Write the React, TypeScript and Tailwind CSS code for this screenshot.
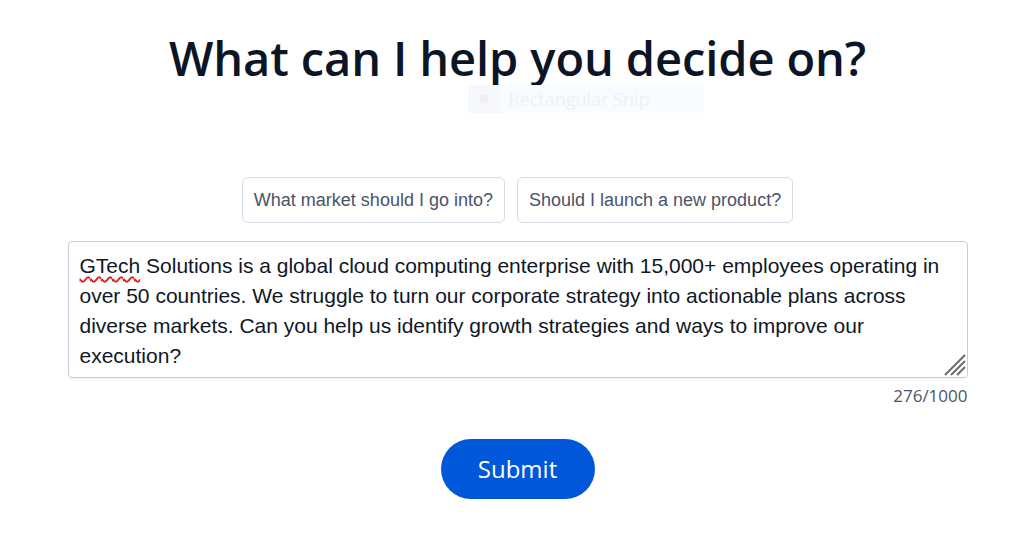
import { useState } from "react";

const suggestions = ["What market should I go into?", "Should I launch a new product?"];

const App = () => {
  const [text] = useState(
    "GTech Solutions is a global cloud computing enterprise with 15,000+ employees operating in over 50 countries. We struggle to turn our corporate strategy into actionable plans across diverse markets. Can you help us identify growth strategies and ways to improve our execution?"
  );

  return (
    <div className="min-h-screen bg-white flex flex-col items-center pt-[24px]">
      <h1 className="text-[47px] leading-[68px] font-semibold text-[#0b1526] font-['Open_Sans',sans-serif] tracking-[-0.1px]">
        What can I help you decide on?
      </h1>

      {/* faint screen-snip leftover */}
      <div className="w-[236px] h-[28px] -mt-[7px] ml-[136px] bg-[#f8fbff] flex items-center font-['Open_Sans',sans-serif]">
        <div className="w-[32px] h-full bg-[#f5f9fe] flex items-center justify-center">
          <div className="w-[10px] h-[10px] rounded-full bg-[#f3eff0]" />
        </div>
        <span className="ml-[9px] text-[18px] text-[#eff1f3]">Rectangular Snip</span>
      </div>

      <div className="flex gap-3 mt-[64px]">
        {suggestions.map((s) => (
          <button
            key={s}
            className="h-[46px] px-[11px] rounded-md border border-[#d6dde8] bg-white text-[18px] text-[#4a5468] font-['Liberation_Sans',Arial,sans-serif]"
          >
            {s}
          </button>
        ))}
      </div>

      <div className="w-[900px] mt-[18px]">
        <div className="relative h-[137px] rounded-[4px] border border-[#c3cddc] shadow-[0_1px_2px_rgba(0,0,0,0.06)] px-[11px] pt-[9px] text-[21px] leading-[30px] text-[#0f1728] font-['Liberation_Sans',Arial,sans-serif]">
          <span className="underline decoration-wavy decoration-[#e0201a] decoration-[1.5px] underline-offset-[3px]">
            GTech
          </span>
          {text.slice(5)}
          <svg
            className="absolute right-[1px] bottom-[1px]"
            width="24"
            height="24"
            viewBox="0 0 24 24"
            stroke="#6b6b6b"
            strokeWidth="2"
          >
            <path d="M3 23L23 3" />
            <path d="M9 23L23 9" />
            <path d="M15 23L23 15" />
          </svg>
        </div>
        <div className="text-right text-[17px] text-[#4a5468] mt-[5px] font-['Open_Sans',sans-serif]">
          {text.length}/1000
        </div>
      </div>

      <button className="mt-[30px] w-[154px] h-[60px] rounded-full bg-[#0057d9] text-white text-[24px] font-['Open_Sans',sans-serif]">
        Submit
      </button>
    </div>
  );
};

export default App;
